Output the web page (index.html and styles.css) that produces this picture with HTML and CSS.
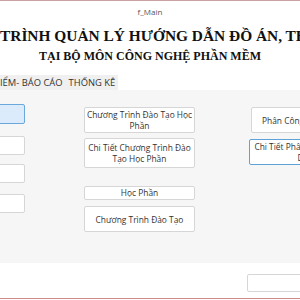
FILE: index.html
```html
<!DOCTYPE html>
<html lang="vi">
<head>
    <meta charset="UTF-8">
    <title>f_Main</title>
    <link rel="stylesheet" href="styles.css">
</head>
<body>
    <div class="window">
        <div class="title-bar">f_Main</div>

        <header class="banner">
            <h1 class="banner-title">TRÌNH QUẢN LÝ HƯỚNG DẪN ĐỒ ÁN, TH</h1>
            <h2 class="banner-sub">TẠI BỘ MÔN CÔNG NGHỆ PHẦN MỀM</h2>
        </header>

        <div class="tabs">
            <span class="tab">IỂM- BÁO CÁO</span>
            <span class="tab">THỐNG KÊ</span>
        </div>

        <div class="tab-panel">
            <div class="col col-left">
                <button class="btn btn-active first"></button>
                <button class="btn second"></button>
                <button class="btn third"></button>
                <button class="btn fourth"></button>
            </div>

            <div class="col col-mid">
                <button class="btn tall">Chương Trình Đào Tạo Học Phần</button>
                <button class="btn taller">Chi Tiết Chương Trình Đào Tạo Học Phần</button>
                <button class="btn short">Học Phần</button>
                <button class="btn tall">Chương Trình Đào Tạo</button>
            </div>

            <div class="col col-right">
                <button class="btn tall">Phân Công Hướng Dẫn</button>
                <button class="btn tall btn-focus">Chi Tiết Phân Công Hướng Dẫn</button>
            </div>
        </div>

        <div class="footer">
            <button class="btn footer-btn"></button>
        </div>
    </div>
</body>
</html>
```

FILE: styles.css
```css
* {
    margin: 0;
    padding: 0;
    box-sizing: border-box;
}

body {
    width: 300px;
    height: 300px;
    overflow: hidden;
    background: #ffffff;
    font-family: "Open Sans", "Noto Sans", sans-serif;
    color: #333333;
}

.window {
    height: 299px;
    border-top: 1px solid #c9a3a3;
    border-bottom: 1px solid #d08c8c;
    display: flex;
    flex-direction: column;
    overflow: hidden;
}

.title-bar {
    height: 20px;
    line-height: 21px;
    text-align: center;
    font-size: 8px;
    color: #555555;
}

.banner {
    height: 48px;
    font-family: "Liberation Serif", "DejaVu Serif", serif;
    font-weight: bold;
    color: #111111;
}

.banner-title {
    font-size: 15.4px;
    line-height: 20px;
    white-space: nowrap;
    overflow: hidden;
    margin-top: 5px;
}

.banner-sub {
    font-size: 12px;
    line-height: 15px;
    text-align: center;
    margin-top: 3px;
}

.tabs {
    height: 21px;
    display: flex;
    align-items: flex-end;
}

.tab {
    font-size: 9.4px;
    line-height: 15px;
    padding: 0 3px;
    background: #f0f0f0;
    color: #333333;
    white-space: nowrap;
}

.tab:first-child {
    padding-left: 0;
}

.tab-panel {
    height: 173px;
    background: #f6f6f6;
    display: flex;
    align-items: flex-start;
    padding-top: 14px;
}

.col {
    display: flex;
    flex-direction: column;
    flex-shrink: 0;
}

.col-left {
    width: 65px;
    margin-left: -40px;
}

.col-mid {
    width: 111px;
    margin-left: 59px;
    margin-top: 3px;
}

.col-right {
    width: 111px;
    margin-left: 56px;
    margin-top: 3px;
}

.btn {
    font-family: inherit;
    font-size: 8.4px;
    line-height: 11px;
    color: #333333;
    background: #ffffff;
    border: 1px solid #d6d6d6;
    border-radius: 2px;
    padding: 0 1px;
    text-align: center;
}

.btn-active {
    background: #dcebfb;
    border-color: #6aa8db;
}

.btn-focus {
    border-color: #5ea2d6;
    margin-left: -2px;
}

.col-left .btn {
    height: 19px;
}

.col-left .first {
    height: 20px;
}

.col-left .second {
    margin-top: 12px;
}

.col-left .third {
    margin-top: 9px;
}

.col-left .fourth {
    margin-top: 11px;
}

.tall {
    height: 26px;
}

.taller {
    height: 30px;
}

.short {
    height: 14px;
    line-height: 12px;
    margin-top: 18px;
}

.col-mid .tall + .taller {
    margin-top: 5px;
}

.short + .tall {
    margin-top: 6px;
}

.col-right .tall + .tall {
    margin-top: 6px;
}

.footer {
    flex: 1;
    display: flex;
    justify-content: flex-end;
    padding-top: 11px;
}

.footer-btn {
    width: 60px;
    height: 18px;
    margin-right: -7px;
}
```
